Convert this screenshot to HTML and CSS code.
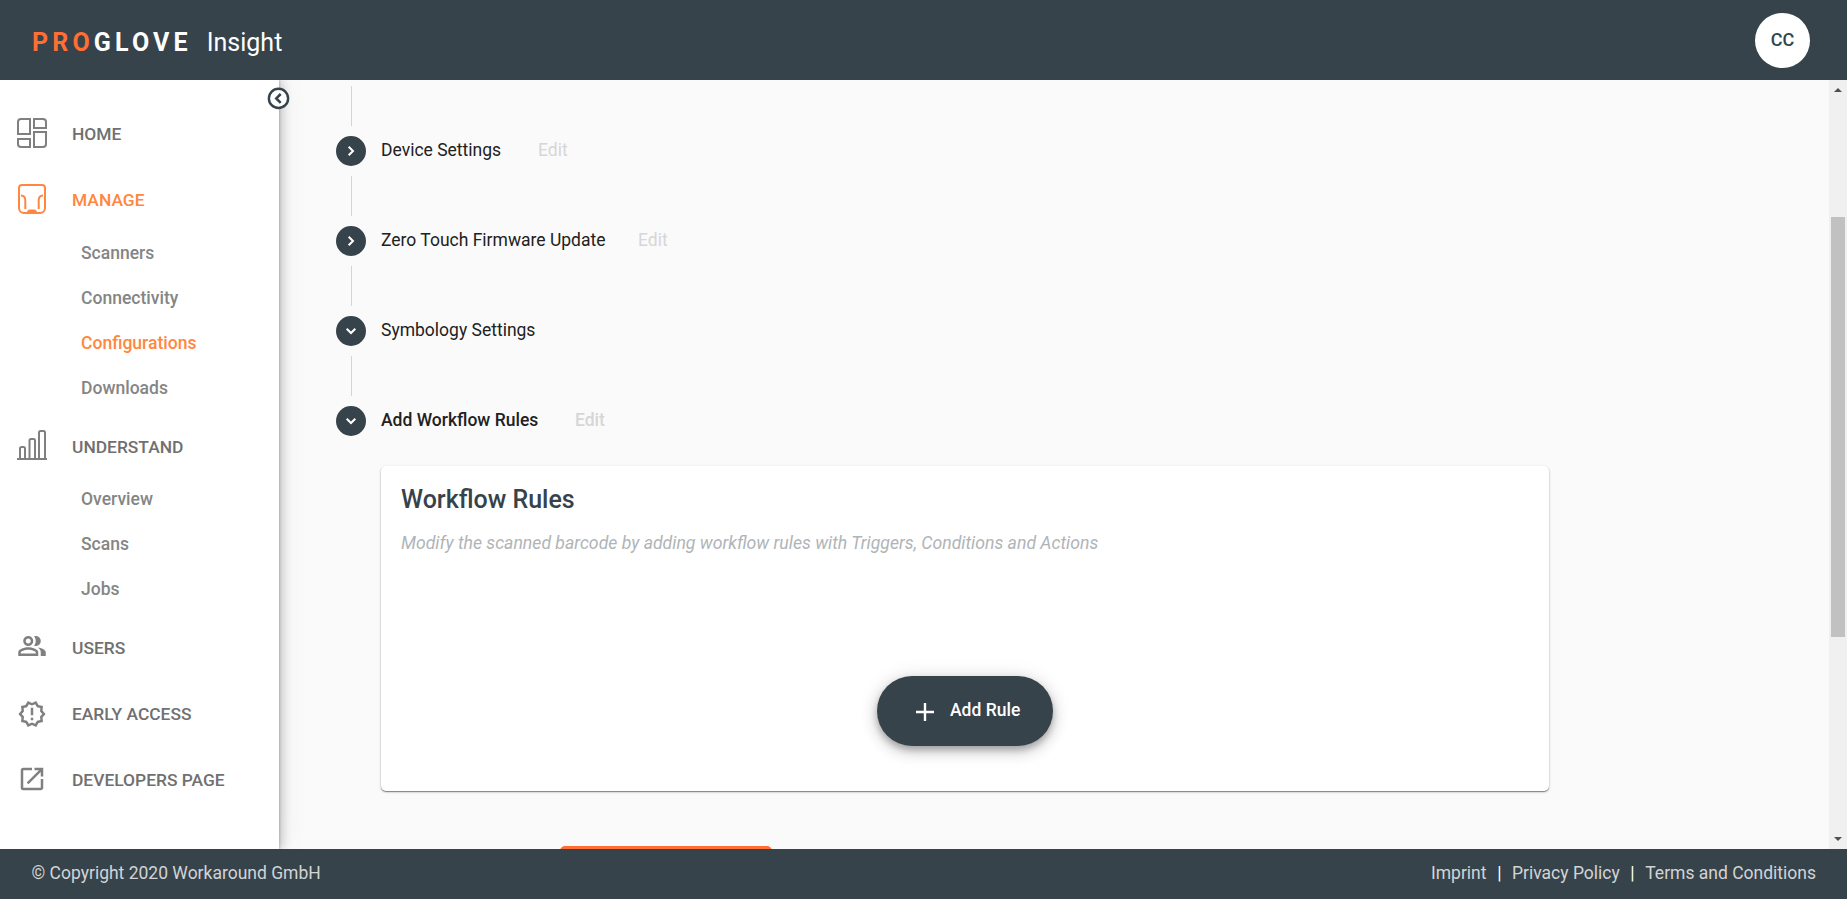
FILE: index.html
```html
<!DOCTYPE html>
<html lang="en">
<head>
<meta charset="utf-8">
<title>ProGlove Insight</title>
<link rel="stylesheet" href="styles.css">
</head>
<body>
<header class="topbar">
  <div class="brand"><span class="logo"><span class="logo-pro">PRO</span>GLOVE</span><span class="product">Insight</span></div>
  <div class="avatar">CC</div>
</header>
<div class="body">
  <nav class="sidebar">
    <button class="collapse" aria-label="Collapse"><svg width="24" height="24" viewBox="0 0 24 24" fill="none" stroke="#36434b"><circle cx="12.500" cy="12.400" r="9.6" fill="#fff" stroke-width="2.4"/><path d="M14.700 8 10.300 12.400l4.400 4.400" stroke-width="2.6"/></svg></button>
    <a class="item"><svg class="icon up-1" width="32" height="32" viewBox="0 0 32 32" fill="none" stroke="#808080" stroke-width="2"><path d="M5 2h9v15H2V5a3 3 0 0 1 3-3zM18 2h9a3 3 0 0 1 3 3v6H18zM2 22h12v8H5a3 3 0 0 1-3-3zM18 15h12v12a3 3 0 0 1-3 3h-9z"/></svg>HOME</a>
    <a class="item active"><svg class="icon up-1" width="32" height="32" viewBox="0 0 32 32" fill="none" stroke="#ff8740" stroke-width="2"><path d="M6 2h20a3 3 0 0 1 3 3v20a5 5 0 0 1-5 5H8a5 5 0 0 1-5-5V5a3 3 0 0 1 3-3z"/><path d="M5 12.500c3 0 4.300 1.500 4.300 5v8.500M27 12.500c-3 0-4.300 1.500-4.300 5v8.500"/><path d="M11 30c.5-2.500 1.500-3 3-3h4c1.500 0 2.500.5 3 3z" fill="#ff8740" stroke-width="1"/></svg>MANAGE</a>
    <div class="sub">
      <a class="subitem">Scanners</a>
      <a class="subitem">Connectivity</a>
      <a class="subitem active">Configurations</a>
      <a class="subitem">Downloads</a>
    </div>
    <a class="item"><svg class="icon up-2" width="32" height="32" viewBox="0 0 32 32" fill="none" stroke="#808080" stroke-width="2"><path d="M1 30h30"/><path d="M4 30V19.500a1.500 1.500 0 0 1 1.500-1.500h2a1.500 1.500 0 0 1 1.500 1.500V30M13.500 30V11.500a1.500 1.500 0 0 1 1.500-1.500h2.500a1.500 1.500 0 0 1 1.500 1.500V30M23 30V3.500A1.500 1.500 0 0 1 24.500 2h3A1.500 1.500 0 0 1 29 3.500V30"/></svg>UNDERSTAND</a>
    <div class="sub sub-short">
      <a class="subitem">Overview</a>
      <a class="subitem">Scans</a>
      <a class="subitem">Jobs</a>
    </div>
    <a class="item"><svg class="icon up-2" width="32" height="32" viewBox="0 0 32 32" fill="#808080"><g transform="translate(1 1) scale(1.25)"><path d="M16.670 13.130C18.040 14.060 19 15.320 19 17v3h4v-3c0-2.180-3.570-3.470-6.330-3.870zM15 12c2.210 0 4-1.790 4-4s-1.790-4-4-4c-.47 0-.91.1-1.330.24C14.500 5.270 15 6.580 15 8s-.5 2.730-1.330 3.760c.42.14.86.24 1.330.24zM9 12c2.210 0 4-1.790 4-4s-1.790-4-4-4-4 1.790-4 4 1.790 4 4 4zm0-6c1.100 0 2 .9 2 2s-.9 2-2 2-2-.9-2-2 .9-2 2-2zM9 13c-2.670 0-8 1.340-8 4v3h16v-3c0-2.660-5.330-4-8-4zm6 5H3v-.99C3.200 16.290 6.300 15 9 15s5.800 1.290 6 2v1z"/></g></svg>USERS</a>
    <a class="item"><svg class="icon" width="32" height="32" viewBox="0 0 32 32" fill="#808080"><g transform="translate(1.200 1.200) scale(1.2333)"><path d="M23 12l-2.440-2.780.34-3.680-3.610-.82-1.890-3.180L12 3 8.600 1.540 6.710 4.720l-3.610.81.34 3.680L1 12l2.440 2.780-.34 3.690 3.610.82 1.890 3.180L12 21l3.400 1.460 1.890-3.180 3.610-.82-.34-3.680L23 12zm-4.510 2.110l.26 2.790-2.740.62-1.430 2.410L12 18.820l-2.580 1.110-1.430-2.410-2.740-.62.26-2.800L3.660 12l1.850-2.120-.26-2.780 2.740-.61 1.430-2.410L12 5.180l2.580-1.110 1.430 2.410 2.740.62-.26 2.790L20.340 12l-1.850 2.110zM11 15h2v2h-2zm0-8h2v6h-2z"/></g></svg>EARLY ACCESS</a>
    <a class="item"><svg class="icon up-1" width="32" height="32" viewBox="0 0 32 32" fill="#808080"><g transform="translate(1 1) scale(1.25)"><path d="M19 19H5V5h7V3H5a2 2 0 0 0-2 2v14a2 2 0 0 0 2 2h14c1.100 0 2-.9 2-2v-7h-2v7zM14 3v2h3.590l-9.830 9.830 1.410 1.410L19 6.410V10h2V3h-7z"/></g></svg>DEVELOPERS PAGE</a>
  </nav>
  <main class="content">
    <div class="connector"></div>
    <div class="step"><span class="dot"><svg width="30" height="30" viewBox="0 0 30 30"><path d="M12.700 10.700 17 15l-4.300 4.300"/></svg></span><span class="label l1">Device Settings</span><span class="edit">Edit</span></div>
    <div class="connector"></div>
    <div class="step"><span class="dot"><svg width="30" height="30" viewBox="0 0 30 30"><path d="M12.700 10.700 17 15l-4.300 4.300"/></svg></span><span class="label l2">Zero Touch Firmware Update</span><span class="edit">Edit</span></div>
    <div class="connector"></div>
    <div class="step"><span class="dot"><svg width="30" height="30" viewBox="0 0 30 30"><path d="M10.700 12.700 15 17l4.300-4.300"/></svg></span><span class="label">Symbology Settings</span></div>
    <div class="connector"></div>
    <div class="step current"><span class="dot"><svg width="30" height="30" viewBox="0 0 30 30"><path d="M10.700 12.700 15 17l4.300-4.300"/></svg></span><span class="label l4">Add Workflow Rules</span><span class="edit">Edit</span></div>
    <section class="card">
      <h2 class="card-title">Workflow Rules</h2>
      <p class="card-text">Modify the scanned barcode by adding workflow rules with Triggers, Conditions and Actions</p>
      <button class="add"><svg width="18" height="18" viewBox="0 0 18 18" stroke="#fff" stroke-width="2.400"><path d="M9 0v18M0 9h18"/></svg><span class="add-text">Add Rule</span></button>
    </section>
    <div class="primary"></div>
  </main>
  <div class="scrollbar">
    <svg class="arrow" width="8" height="4" viewBox="0 0 8 4"><path d="M0 4 4 0l4 4z" fill="#505050"/></svg>
    <div class="thumb"></div>
    <svg class="arrow" width="8" height="4" viewBox="0 0 8 4"><path d="M0 0l4 4 4-4z" fill="#505050"/></svg>
  </div>
</div>
<footer class="footer"><span class="copy">© Copyright 2020 Workaround GmbH</span><span class="links"><a>Imprint</a><i class="bar">|</i><a>Privacy Policy</a><i class="bar">|</i><a>Terms and Conditions</a></span></footer>
</body>
</html>
```
FILE: styles.css
```css
* { box-sizing: border-box; }
body { margin: 0; height: 899px; overflow: hidden; display: flex; flex-direction: column; font-family: Roboto, sans-serif; font-size: 18px; background: #fafafa; color: #212121; }
.topbar { height: 80px; flex: none; background: #36434b; display: flex; align-items: center; justify-content: space-between; padding: 1px 37px 0 32px; }
.brand { display: flex; align-items: center; color: #fff; font-size: 25px; line-height: 30px; padding-top: 4px; }
.logo { font-weight: 700; letter-spacing: 4.150px; }
.logo-pro { color: #ff6f33; }
.product { margin-left: 15px; }
.avatar { width: 55px; height: 55px; border-radius: 50%; background: #fff; color: #36434b; font-weight: 500; font-size: 18px; line-height: 53px; text-align: center; }
.body { flex: 1; min-height: 0; display: flex; }
.sidebar { position: relative; z-index: 1; width: 279px; flex: none; background: #fff; padding-top: 21px; box-shadow: 1px 0 2px rgba(0,0,0,.16), 3px 0 10px rgba(0,0,0,.2), 4px 0 28px rgba(0,0,0,.05); clip-path: inset(0 -50px 0 0); }
.collapse { position: absolute; right: -11px; top: 6px; width: 24px; height: 24px; padding: 0; border: 0; background: none; }
.collapse svg { display: block; }
.item { display: flex; align-items: center; height: 66px; padding-left: 16px; gap: 24px; font-weight: 500; font-size: 17.400px; color: #707070; }
.icon { flex: none; }
.up-1 { margin-top: -2px; }
.up-2 { margin-top: -4px; }
.item.active, .subitem.active { color: #ff8740; }
.sub { height: 184px; margin-top: -3px; }
.sub-short { height: 139px; margin-top: -4px; }
.subitem { display: flex; align-items: center; height: 45px; padding-left: 81px; font-weight: 500; font-size: 17.550px; color: #858585; }
.content { flex: 1; padding: 6px 0 0 57px; overflow: hidden; }
.connector { width: 1px; height: 40px; margin-left: 15px; background: #d4d4d4; }
.step { height: 50px; display: flex; align-items: center; }
.dot { width: 30px; height: 30px; margin-right: 15px; border-radius: 50%; background: #36434b; }
.dot svg { display: block; fill: none; stroke: #fff; stroke-width: 2; }
.label { font-size: 17.500px; line-height: 24px; margin-top: -2px; }
.l1, .l2, .l4 { flex: none; }
.l1 { width: 157px; }
.l2 { width: 257px; }
.l4 { width: 194px; }
.edit { color: #d6d6d6; font-size: 17.500px; line-height: 24px; margin-top: -2px; }
.current { font-weight: 500; }
.card { width: 1168px; height: 325px; margin: 20px 0 0 45px; padding: 18px 20px 0; background: #fff; border-radius: 5px; box-shadow: 0 1px 1px rgba(0,0,0,.4), 0 1px 3px rgba(0,0,0,.2); display: flex; flex-direction: column; }
.card-title { margin: 0; font-weight: 500; font-size: 25px; line-height: 32px; color: #36434b; }
.card-text { margin: 15px 0 0; font-style: italic; font-size: 17.650px; line-height: 24px; color: #b0b4b7; }
.add { align-self: center; margin-top: 121px; width: 176px; height: 70px; padding: 0 0 0 39px; border: 0; border-radius: 35px; background: #36434b; color: #fff; display: flex; align-items: center; gap: 16px; font: 500 17.500px Roboto, sans-serif; box-shadow: 0 4px 6px rgba(0,0,0,.22), 0 6px 16px rgba(0,0,0,.16), 0 1px 20px rgba(0,0,0,.1); }
.add svg { margin-top: 2px; }
.add-text { margin-top: -2px; }
.primary { width: 212px; height: 45px; margin: 55px 0 0 223.500px; border-radius: 5px; background: #ff6f33; }
.scrollbar { width: 18px; background: #f0f0f0; display: flex; flex-direction: column; align-items: center; padding: 8px 0; }
.arrow { flex: none; }
.thumb { width: 14px; height: 420px; margin: 125px 0 auto; background: #c1c1c1; }
.footer { height: 50px; flex: none; background: #36434b; color: #d2d4d5; display: flex; align-items: center; justify-content: space-between; padding: 0 31px 2px 31.500px; font-size: 17.500px; z-index: 2; }
.links { display: flex; }
.bar { width: 25.500px; text-align: center; font-style: normal; color: #fff; }
```
